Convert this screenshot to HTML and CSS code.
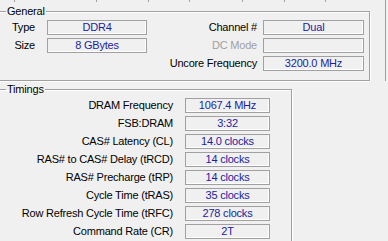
FILE: index.html
```html
<!DOCTYPE html>
<html lang="en">
<head>
  <meta charset="UTF-8">
  <title>Memory</title>
  <link rel="stylesheet" href="styles.css">
</head>
<body>

  <div class="top">
    <div class="tabstrip">
      <span style="width: 15px"></span>
      <span style="width: 82px"></span>
      <span style="width: 52px"></span>
      <span style="width: 41px"></span>
      <span style="width: 53px"></span>
      <span style="width: 42px"></span>
      <span style="width: 41px"></span>
    </div>

    <fieldset class="group general">
      <legend>General</legend>
      <div class="grid-general">
        <label>Type</label>
        <div class="value">DDR4</div>
        <label>Channel #</label>
        <div class="value">Dual</div>

        <label>Size</label>
        <div class="value">8 GBytes</div>
        <label class="disabled">DC Mode</label>
        <div class="value"></div>

        <span></span>
        <span></span>
        <label>Uncore Frequency</label>
        <div class="value">3200.0 MHz</div>
      </div>
    </fieldset>
  </div>

  <fieldset class="group timings">
    <legend>Timings</legend>
    <div class="grid-timings">
      <label>DRAM Frequency</label>
      <div class="value">1067.4 MHz</div>
      <label>FSB:DRAM</label>
      <div class="value">3:32</div>
      <label>CAS# Latency (CL)</label>
      <div class="value">14.0 clocks</div>
      <label>RAS# to CAS# Delay (tRCD)</label>
      <div class="value">14 clocks</div>
      <label>RAS# Precharge (tRP)</label>
      <div class="value">14 clocks</div>
      <label>Cycle Time (tRAS)</label>
      <div class="value">35 clocks</div>
      <label>Row Refresh Cycle Time (tRFC)</label>
      <div class="value">278 clocks</div>
      <label>Command Rate (CR)</label>
      <div class="value">2T</div>
    </div>
  </fieldset>

</body>
</html>
```

FILE: styles.css
```css
body {
  font-family: "Liberation Sans", Arial, sans-serif;
  font-size: 11px;
  letter-spacing: -0.2px;
  margin: 0;
  width: 388px;
  height: 241px;
  overflow: hidden;
  background-color: #f0f0f0;
  color: #000;
}

.top {
  width: 386px;
  height: 81px;
  border-right: 1px solid #a0a0a0;
  box-sizing: border-box;
}

.tabstrip {
  display: flex;
  height: 2px;
  margin-bottom: 3px;
}

.tabstrip span {
  height: 2px;
  border-right: 1px solid #a0a0a0;
  box-sizing: border-box;
}

.group {
  margin: 0 0 0 -2px;
  padding: 0;
  border: 1px solid #a0a0a0;
  box-shadow: inset 1px 1px 0 #fff, 1px 1px 0 #fff;
  box-sizing: border-box;
  min-width: 0;
}

.group legend {
  margin-left: 5px;
  padding: 0 1px;
  line-height: 13px;
  height: 13px;
}

.general {
  width: 372px;
  height: 76px;
  padding: 2px 0 0 2px;
}

.timings {
  width: 294px;
  height: 162px;
  margin-top: 2px;
  padding: 2px 0 0 2px;
}

.grid-general {
  display: grid;
  grid-template-columns: 46px 100px 116px 101px;
  grid-auto-rows: 15px;
  row-gap: 3px;
}

.grid-timings {
  display: grid;
  grid-template-columns: 184px 85px;
  grid-auto-rows: 15px;
  row-gap: 3px;
}

label {
  text-align: right;
  line-height: 15px;
  white-space: nowrap;
}

.grid-general label:nth-child(4n+1) {
  padding-right: 12px;
}

.grid-general label:nth-child(4n+3) {
  padding-right: 6px;
}

.grid-timings label {
  padding-right: 12px;
}

label.disabled {
  color: #a0a0a0;
}

.value {
  border: 1px solid #a0a0a0;
  box-shadow: inset -1px -1px 0 #fff;
  color: #1c1ca0;
  text-align: center;
  line-height: 13px;
  white-space: nowrap;
}
```
